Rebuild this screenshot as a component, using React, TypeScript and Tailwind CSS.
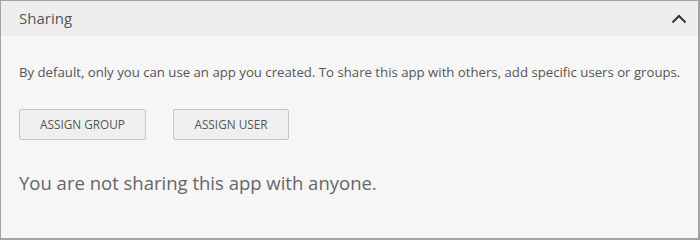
export default function App() {
  return (
    <div
      className="h-[240px] w-[700px] bg-[#f6f6f6] text-[#555]"
      style={{ fontFamily: '"Open Sans", "Noto Sans", sans-serif' }}
    >
      <section className="flex h-full flex-col border border-r-2 border-b-2 border-[#a3a3a3]">
        <header className="flex h-[35px] items-center justify-between bg-[#eeeeee] pl-[18px] pr-[11px]">
          <h2 className="text-[15px] text-[#555]">Sharing</h2>
          <svg width="16" height="10" viewBox="0 0 16 10" fill="none" className="mt-[1px]">
            <path d="M1.5 8.5 L8 2 L14.5 8.5" stroke="#333" strokeWidth="2" />
          </svg>
        </header>
        <div className="flex flex-col pl-[18px]">
          <p className="mt-[27px] text-[13.2px] leading-[19px] text-[#555]">
            By default, only you can use an app you created. To share this app with others, add specific users or groups.
          </p>
          <div className="mt-[27px] flex gap-[27px]">
            <button className="h-[31px] w-[127px] rounded-[2px] border border-[#c6c6c6] bg-[#efefef] text-[11.8px] text-[#555]">
              ASSIGN GROUP
            </button>
            <button className="h-[31px] w-[116px] rounded-[2px] border border-[#c6c6c6] bg-[#efefef] text-[11.8px] text-[#555]">
              ASSIGN USER
            </button>
          </div>
          <p className="mt-[30px] text-[18.5px] leading-[25px] text-[#666]">
            You are not sharing this app with anyone.
          </p>
        </div>
      </section>
    </div>
  );
}
